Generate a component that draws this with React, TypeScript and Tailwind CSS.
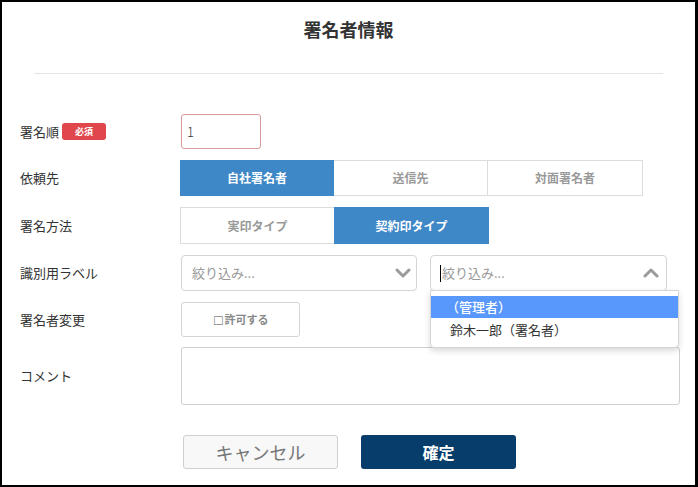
import React from "react";

const font = { fontFamily: '"Noto Sans CJK JP", "Noto Sans", sans-serif' };

function ChevronDown() {
  return (
    <svg width="16" height="10" viewBox="0 0 16 10">
      <polyline points="2,2 8,8 14,2" fill="none" stroke="#9a9a9a" strokeWidth="3" strokeLinecap="round" strokeLinejoin="round" />
    </svg>
  );
}
function ChevronUp() {
  return (
    <svg width="16" height="10" viewBox="0 0 16 10">
      <polyline points="2,8 8,2 14,8" fill="none" stroke="#9a9a9a" strokeWidth="3" strokeLinecap="round" strokeLinejoin="round" />
    </svg>
  );
}

function Label({ children }: { children: React.ReactNode }) {
  return <div className="w-[178px] shrink-0 pl-[18px] text-[13px] text-[#333] flex items-center gap-[3px]">{children}</div>;
}

export default function App() {
  return (
    <div style={font} className="w-[698px] h-[487px] bg-black pt-[2px] pl-[2px] pr-[3px] pb-[2px]">
      <div className="w-full h-full bg-white flex flex-col">
        <div className="pt-[15px] h-[45px] text-center text-[18px] font-bold text-[#333] leading-[24px]">署名者情報</div>
        <div className="mx-[32px] mt-[26px] h-[1px] bg-[#e3e3e3]" />
        <div className="mt-[40px] flex flex-col">
          {/* row 1 */}
          <div className="flex items-center h-[35px]">
            <Label>
              <span>署名順</span>
              <span className="bg-[#e0474c] text-white text-[9px] font-bold rounded-[3px] w-[44px] h-[17px] flex items-center justify-center">必須</span>
            </Label>
            <div className="ml-[1px] w-[80px] h-[35px] border border-[#d99a9a] rounded-[3px] flex items-center pl-[5px] text-[13px] text-[#333] font-light">1</div>
          </div>
          {/* row 2 */}
          <div className="flex items-center h-[36px] mt-[11px]">
            <Label>依頼先</Label>
            <div className="flex h-[36px]">
              <div className="w-[154px] bg-[#3f88c7] text-white text-[12px] font-bold flex items-center justify-center">自社署名者</div>
              <div className="w-[154px] border border-[#dcdcdc] border-l-0 text-[#999] text-[12px] font-bold flex items-center justify-center">送信先</div>
              <div className="w-[155px] border border-[#dcdcdc] border-l-0 text-[#999] text-[12px] font-bold flex items-center justify-center">対面署名者</div>
            </div>
          </div>
          {/* row 3 */}
          <div className="flex items-center h-[37px] mt-[11px]">
            <Label>署名方法</Label>
            <div className="flex h-[37px]">
              <div className="w-[154px] border border-[#dcdcdc] border-r-0 text-[#999] text-[12px] font-bold flex items-center justify-center">実印タイプ</div>
              <div className="w-[155px] bg-[#3f88c7] text-white text-[12px] font-bold flex items-center justify-center">契約印タイプ</div>
            </div>
          </div>
          {/* row 4 */}
          <div className="flex items-center h-[36px] mt-[11px]">
            <Label>識別用ラベル</Label>
            <div className="ml-[1px] w-[236px] h-[36px] border border-[#d5d5d5] rounded-[4px] flex items-center justify-between pl-[10px] pr-[5px]">
              <span className="text-[13px] text-[#999]">絞り込み...</span>
              <ChevronDown />
            </div>
            <div className="relative ml-[13px] w-[237px] h-[36px]">
              <div className="w-full h-full border border-[#d5d5d5] rounded-[4px] flex items-center justify-between pl-[9px] pr-[7px]">
                <span className="flex items-center text-[13px] text-[#999]">
                  <span className="w-[1px] h-[17px] bg-black mr-[1px]" />
                  絞り込み...
                </span>
                <ChevronUp />
              </div>
              <div className="absolute left-0 top-[35px] w-[249px] bg-white border border-[#d5d5d5] rounded-b-[4px] shadow-[0_3px_6px_rgba(0,0,0,0.15)] pt-[5px] pb-[6px] z-10">
                <div className="h-[22px] bg-[#5897fb] text-white text-[13px] font-medium flex items-center pl-[15px]">（管理者）</div>
                <div className="h-[22px] text-[#333] text-[13px] flex items-center pl-[19px] mt-[1px]">鈴木一郎（署名者）</div>
              </div>
            </div>
          </div>
          {/* row 5 */}
          <div className="flex items-center h-[35px] mt-[11px]">
            <Label>署名者変更</Label>
            <div className="ml-[1px] w-[119px] h-[35px] border border-[#d5d5d5] rounded-[3px] flex items-center justify-center text-[11px] text-[#888]">
              <span className="text-[12px] leading-none mr-[1px]">☐</span>
              <span className="font-bold">許可する</span>
            </div>
          </div>
          {/* row 6 */}
          <div className="flex items-center h-[58px] mt-[10px]">
            <Label>コメント</Label>
            <div className="ml-[1px] w-[499px] h-[58px] border border-[#cfcfcf] rounded-[3px]" />
          </div>
          {/* buttons */}
          <div className="flex mt-[30px] pl-[181px] gap-[23px]">
            <div className="w-[155px] h-[34px] bg-[#f8f8f8] border border-[#cfcfcf] rounded-[3px] flex items-center justify-center text-[18px] text-[#777]">キャンセル</div>
            <div className="w-[155px] h-[34px] bg-[#063d6b] rounded-[3px] flex items-center justify-center text-[16px] font-bold text-white">確定</div>
          </div>
        </div>
      </div>
    </div>
  );
}
